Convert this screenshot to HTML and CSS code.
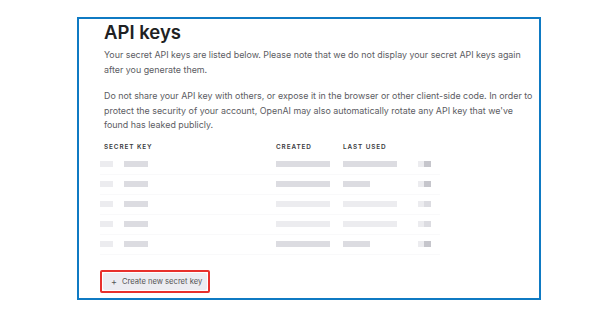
FILE: index.html
```html
<!DOCTYPE html>
<html>
<head>
<meta charset="utf-8">
<link rel="stylesheet" href="styles.css">
</head>
<body>
<div class="frame">
  <h1 class="title">API keys</h1>
  <p class="text">Your secret API keys are listed below. Please note that we do not display your secret API keys again after you generate them.</p>
  <p class="text">Do not share your API key with others, or expose it in the browser or other client-side code. In order to protect the security of your account, OpenAI may also automatically rotate any API key that we've found has leaked publicly.</p>
  <div class="table">
    <div class="row head">
      <div class="c1">SECRET KEY</div>
      <div class="c2">CREATED</div>
      <div class="c3">LAST USED</div>
      <div class="c4"></div>
    </div>
    <div class="row">
      <div class="c1"><span class="b l" style="width:13px"></span><span class="b" style="width:24px;margin-left:11px"></span></div>
      <div class="c2"><span class="b" style="width:54px"></span></div>
      <div class="c3"><span class="b" style="width:54px"></span></div>
      <div class="c4"><span class="b l" style="width:6px"></span><span class="b d" style="width:7px"></span></div>
    </div>
    <div class="row">
      <div class="c1"><span class="b l" style="width:13px"></span><span class="b" style="width:24px;margin-left:11px"></span></div>
      <div class="c2"><span class="b" style="width:54px"></span></div>
      <div class="c3"><span class="b" style="width:27px"></span></div>
      <div class="c4"><span class="b l" style="width:6px"></span><span class="b d" style="width:7px"></span></div>
    </div>
    <div class="row">
      <div class="c1"><span class="b l" style="width:13px"></span><span class="b" style="width:24px;margin-left:11px"></span></div>
      <div class="c2"><span class="b l" style="width:54px"></span></div>
      <div class="c3"><span class="b l" style="width:54px"></span></div>
      <div class="c4"><span class="b l" style="width:6px"></span><span class="b" style="width:7px"></span></div>
    </div>
    <div class="row">
      <div class="c1"><span class="b l" style="width:13px"></span><span class="b" style="width:24px;margin-left:11px"></span></div>
      <div class="c2"><span class="b l" style="width:54px"></span></div>
      <div class="c3"><span class="b l" style="width:54px"></span></div>
      <div class="c4"><span class="b l" style="width:6px"></span><span class="b" style="width:7px"></span></div>
    </div>
    <div class="row">
      <div class="c1"><span class="b l" style="width:13px"></span><span class="b" style="width:24px;margin-left:11px"></span></div>
      <div class="c2"><span class="b" style="width:54px"></span></div>
      <div class="c3"><span class="b" style="width:27px"></span></div>
      <div class="c4"><span class="b l" style="width:6px"></span><span class="b d" style="width:7px"></span></div>
    </div>
  </div>
  <div class="btn-wrap">
    <button class="btn"><span class="plus">+</span>Create new secret key</button>
  </div>
</div>
</body>
</html>
```
FILE: styles.css
```css
* { box-sizing: border-box; }
body {
  margin: 0;
  background: #fff;
  font-family: Inter, "Noto Sans", sans-serif;
}
.frame {
  margin: 17px 0 0 77px;
  width: 464px;
  height: 283px;
  border: 2px solid #0f7ac3;
  padding: 0 0 0 25px;
  display: flex;
  flex-direction: column;
}
.title {
  margin: 2px 0 0 0;
  font-size: 18.5px;
  line-height: 22px;
  font-weight: 600;
  color: #202123;
}
.text {
  margin: 5px 0 0 0;
  width: 434px;
  font-size: 8.9px;
  line-height: 14.6px;
  color: #5c5c63;
}
.text + .text { margin-top: 12px; }
.table {
  margin-top: 6px;
  margin-left: -4px;
  width: 340px;
}
.row {
  display: flex;
  align-items: center;
  height: 20px;
  border-bottom: 1px solid #f9f9fa;
}
.row.head {
  height: 16px;
  border-bottom: none;
  font-size: 6.4px;
  font-weight: 600;
  letter-spacing: 0.9px;
  color: #3a3a40;
}
.row.head .c1 { padding-left: 4px; }
.c1 { width: 176px; display: flex; }
.c2 { width: 67px; display: flex; }
.c3 { width: 75px; display: flex; }
.c4 { width: 20px; display: flex; }
.b {
  display: block;
  height: 6px;
  background: #dcdce1;
  filter: blur(0.6px);
}
.b.l { background: #ececef; }
.b.d { background: #c6c6cc; }
.btn-wrap {
  margin-top: 15px;
  margin-left: -4px;
  width: 110px;
  border: 2px solid #e8302c;
  border-radius: 2px;
  padding: 1px;
}
.btn {
  display: flex;
  align-items: center;
  width: 100%;
  height: 17px;
  border: none;
  border-radius: 2px;
  background: #ececf1;
  font-family: Inter, "Noto Sans", sans-serif;
  font-size: 7.6px;
  color: #555;
  padding: 0 0 0 8px;
}
.plus { font-size: 9px; margin-right: 5px; color: #555; }
```
